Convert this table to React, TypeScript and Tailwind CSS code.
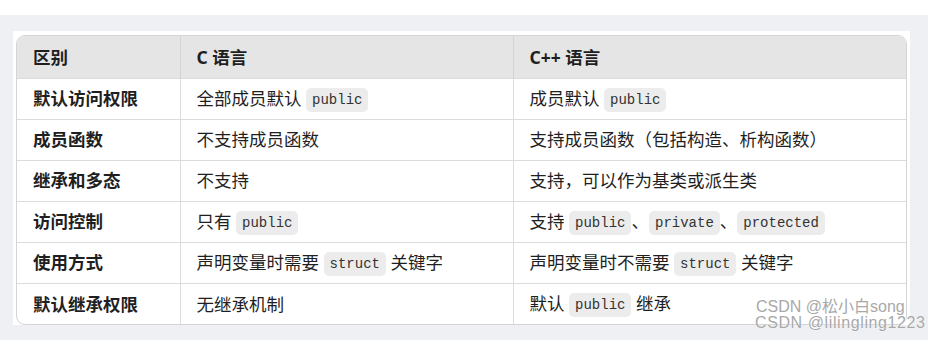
const rows = [
  {
    name: "默认访问权限",
    c: ["全部成员默认 ", { code: "public" }],
    cpp: ["成员默认 ", { code: "public" }],
  },
  { name: "成员函数", c: ["不支持成员函数"], cpp: ["支持成员函数（包括构造、析构函数）"] },
  { name: "继承和多态", c: ["不支持"], cpp: ["支持，可以作为基类或派生类"] },
  {
    name: "访问控制",
    c: ["只有 ", { code: "public" }],
    cpp: ["支持 ", { code: "public" }, "、", { code: "private" }, "、", { code: "protected" }],
  },
  {
    name: "使用方式",
    c: ["声明变量时需要 ", { code: "struct" }, " 关键字"],
    cpp: ["声明变量时不需要 ", { code: "struct" }, " 关键字"],
  },
  {
    name: "默认继承权限",
    c: ["无继承机制"],
    cpp: ["默认 ", { code: "public" }, " 继承"],
  },
];

type Part = string | { code: string };

const Code = ({ children }: { children: string }) => (
  <code className="inline-block rounded-[5px] bg-[#ececec] px-[6px] leading-[24px] text-[14px] text-[#333] font-['Liberation_Mono',monospace] align-middle">
    {children}
  </code>
);

const Cell = ({ parts }: { parts: Part[] }) => (
  <span className="whitespace-pre">
    {parts.map((p, i) =>
      typeof p === "string" ? <span key={i}>{p}</span> : <Code key={i}>{p.code}</Code>
    )}
  </span>
);

const App = () => {
  return (
    <div className="relative w-[928px] h-[340px] overflow-hidden bg-white pt-[15px] font-['Noto_Sans','Noto_Sans_CJK_SC',sans-serif] text-[17.5px] text-[#1f1f1f]">
      <div className="h-[325px] bg-[#eef0f3] pl-[13px] pr-[18px] pt-[16px]">
        <div className="h-[294px] bg-white pl-[3px] pr-[3px] pt-[4px]">
          <div className="overflow-hidden rounded-[9px] border border-[#d4d4d4]">
            <table className="w-full border-collapse">
              <thead>
                <tr className="h-[42px] bg-[#e5e5e5] font-bold">
                  <th className="w-[163px] pl-[16px] text-left">区别</th>
                  <th className="w-[333px] border-l border-[#d4d4d4] pl-[16px] text-left">C 语言</th>
                  <th className="border-l border-[#d4d4d4] pl-[16px] text-left">C++ 语言</th>
                </tr>
              </thead>
              <tbody>
                {rows.map((r) => (
                  <tr key={r.name} className="h-[41px] border-t border-[#dcdcdc]">
                    <td className="pl-[16px] font-bold">{r.name}</td>
                    <td className="border-l border-[#dcdcdc] pl-[16px]">
                      <Cell parts={r.c as Part[]} />
                    </td>
                    <td className="border-l border-[#dcdcdc] pl-[16px]">
                      <Cell parts={r.cpp as Part[]} />
                    </td>
                  </tr>
                ))}
              </tbody>
            </table>
          </div>
        </div>
      </div>
      <div className="absolute left-[755px] top-[299px] flex flex-col text-[16px] leading-[16px] text-[#a8a8a8] font-['Liberation_Sans','Noto_Sans_CJK_SC',sans-serif] [text-shadow:0_0_1px_#fff,0_0_1px_#fff]">
        <span className="pl-[1px]">CSDN @松小白song</span>
        <span className="tracking-[0.6px]">CSDN @lilingling1223</span>
      </div>
    </div>
  );
};

export default App;
